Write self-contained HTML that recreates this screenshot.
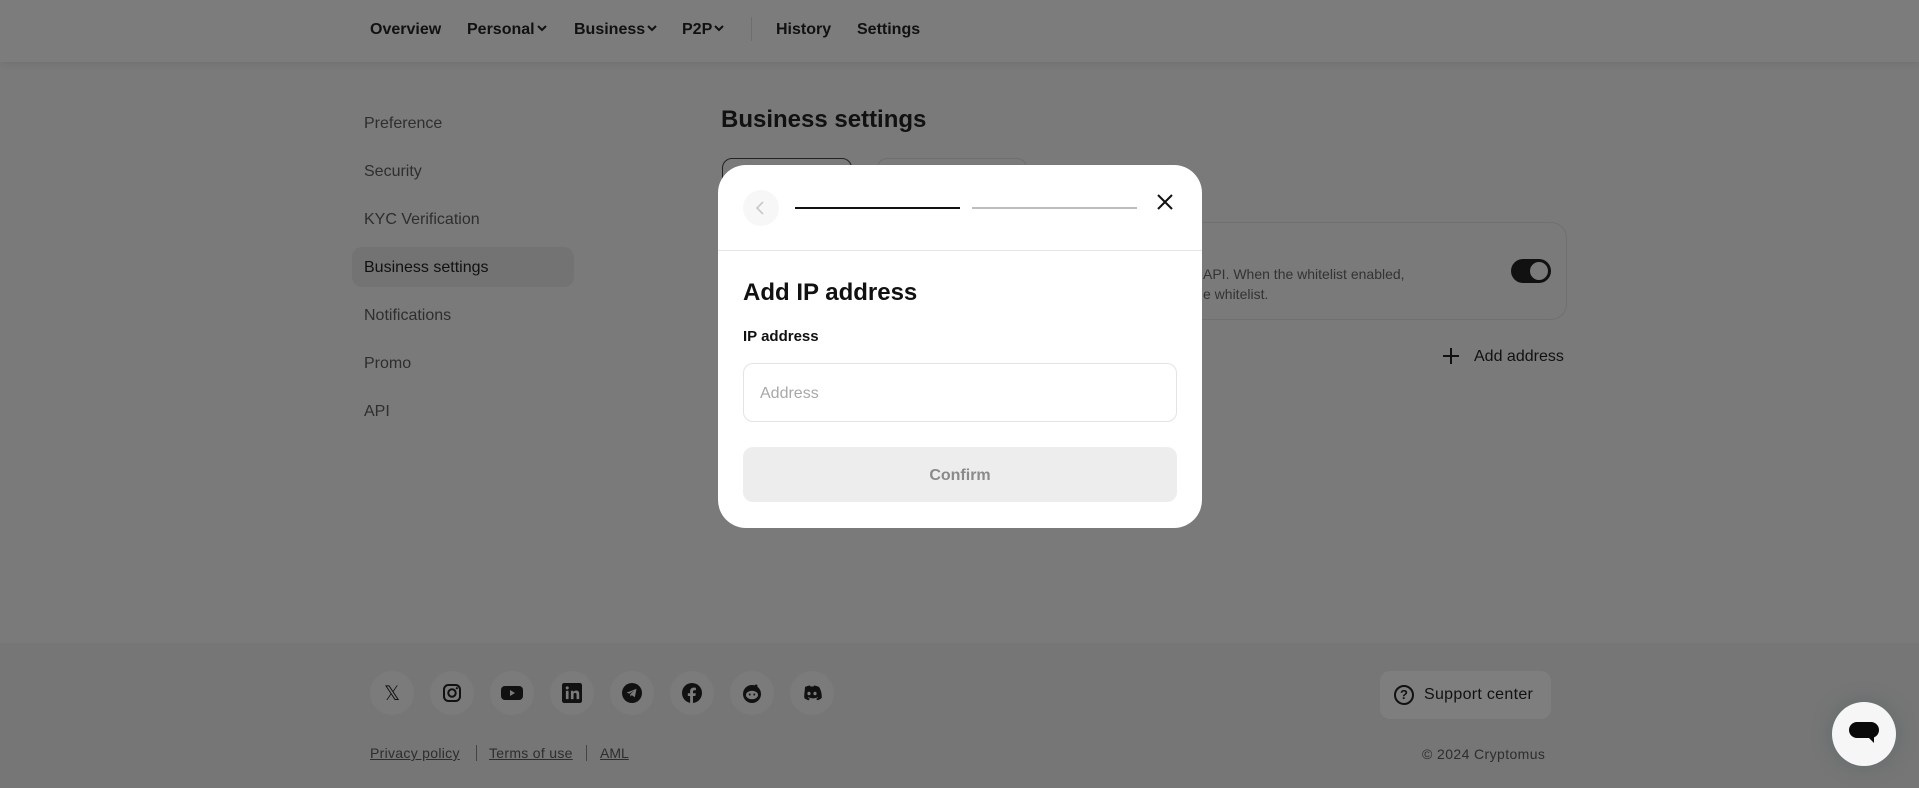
<!DOCTYPE html>
<html><head><meta charset="utf-8"><style>
*{margin:0;padding:0;box-sizing:border-box}
body{width:1919px;height:788px;overflow:hidden;background:#7a7a7a;font-family:"Liberation Sans",sans-serif;position:relative;color:#111}
.a{position:absolute;white-space:nowrap}
.hdr{position:absolute;left:0;top:0;width:1919px;height:62px;background:#7c7c7c;box-shadow:0 2px 8px rgba(0,0,0,.08)}
.nav{font-size:16px;font-weight:bold;color:#111;top:21px}
.nav svg{margin-left:2px;vertical-align:2px}
.side{font-size:16px;color:#2e2e2e;left:364px}
.ftr{position:absolute;left:0;top:643px;width:1919px;height:145px;background:#767676}
.ic{position:absolute;width:44px;height:44px;border-radius:50%;background:#7b7b7b;top:671px;display:flex;align-items:center;justify-content:center}
.lk{font-size:14px;color:#2d2d2d;text-decoration:underline;top:745px}
</style></head><body>
<div class="hdr"></div>
<div class="a nav" style="left:370px">Overview</div>
<div class="a nav" style="left:467px">Personal<svg width="10" height="7" viewBox="0 0 10 7"><path d="M1 1l4 4 4-4" fill="none" stroke="#111" stroke-width="2"/></svg></div>
<div class="a nav" style="left:574px">Business<svg width="10" height="7" viewBox="0 0 10 7"><path d="M1 1l4 4 4-4" fill="none" stroke="#111" stroke-width="2"/></svg></div>
<div class="a nav" style="left:682px">P2P<svg width="10" height="7" viewBox="0 0 10 7"><path d="M1 1l4 4 4-4" fill="none" stroke="#111" stroke-width="2"/></svg></div>
<div class="a" style="left:751px;top:17px;width:1px;height:24px;background:#6e6e6e"></div>
<div class="a nav" style="left:776px">History</div>
<div class="a nav" style="left:857px">Settings</div>

<div class="a" style="left:352px;top:247px;width:222px;height:40px;border-radius:10px;background:#737373"></div>
<div class="a side" style="top:115px">Preference</div>
<div class="a side" style="top:163px">Security</div>
<div class="a side" style="top:211px">KYC Verification</div>
<div class="a side" style="top:259px;color:#111">Business settings</div>
<div class="a side" style="top:307px">Notifications</div>
<div class="a side" style="top:355px">Promo</div>
<div class="a side" style="top:403px">API</div>

<div class="a" style="left:721px;top:106px;font-size:24px;font-weight:bold;color:#111">Business settings</div>
<div class="a" style="left:722px;top:158px;width:130px;height:40px;border:1.5px solid #222;border-radius:10px"></div>
<div class="a" style="left:877px;top:158px;width:150px;height:40px;border:1px solid #6f6f6f;border-radius:10px"></div>
<div class="a" style="left:1100px;top:222px;width:467px;height:98px;border:1px solid #707070;border-radius:16px"></div>
<div class="a" style="left:1203px;top:264px;font-size:14px;color:#333;line-height:20px">API. When the whitelist enabled,<br>e whitelist.</div>
<div class="a" style="left:1511px;top:259px;width:40px;height:24px;border-radius:12px;background:#111"></div>
<div class="a" style="left:1529px;top:261px;width:20px;height:20px;border-radius:50%;background:#7a7a7a;border:1.5px solid #111"></div>
<svg class="a" style="left:1443px;top:348px" width="16" height="16" viewBox="0 0 16 16"><path d="M8 0v16M0 8h16" stroke="#111" stroke-width="2"/></svg>
<div class="a" style="left:1474px;top:348px;font-size:16px;color:#111">Add address</div>

<div class="ftr"></div>
<div class="ic" style="left:370px;font-size:20px">𝕏</div>
<div class="ic" style="left:430px"><svg width="20" height="20" viewBox="0 0 20 20"><rect x="2" y="2" width="16" height="16" rx="4.5" fill="none" stroke="#111" stroke-width="2"/><circle cx="10" cy="10" r="3.7" fill="none" stroke="#111" stroke-width="2"/><circle cx="14.8" cy="5.2" r="1.1" fill="#111"/></svg></div>
<div class="ic" style="left:490px"><svg width="22" height="16" viewBox="0 0 22 16"><rect x="0" y="1" width="22" height="14" rx="4" fill="#111"/><path d="M9 5v6l5-3z" fill="#7b7b7b"/></svg></div>
<div class="ic" style="left:550px"><svg width="20" height="20" viewBox="0 0 18 18"><rect width="18" height="18" rx="2" fill="#111"/><rect x="3.5" y="7" width="2.4" height="7.5" fill="#7b7b7b"/><circle cx="4.7" cy="4.4" r="1.4" fill="#7b7b7b"/><path d="M8 7h2.3v1.2c.5-.9 1.5-1.4 2.6-1.4 2 0 2.6 1.3 2.6 3.3v4.4h-2.4v-4c0-1-.3-1.6-1.2-1.6-1 0-1.5.7-1.5 1.7v3.9H8z" fill="#7b7b7b"/></svg></div>
<div class="ic" style="left:610px"><svg width="20" height="20" viewBox="0 0 20 20"><circle cx="10" cy="10" r="10" fill="#111"/><path d="M4.5 9.8l10-4-1.7 8.5-3-2.2-1.5 1.5v-2.5l4-3.6-5 3.1z" fill="#7b7b7b"/></svg></div>
<div class="ic" style="left:670px"><svg width="20" height="20" viewBox="0 0 20 20"><circle cx="10" cy="10" r="10" fill="#111"/><path d="M11 20v-7h2.4l.4-2.8H11V8.6c0-.8.3-1.4 1.4-1.4h1.5V4.7c-.3 0-1.2-.1-2.2-.1-2.1 0-3.6 1.3-3.6 3.7v1.9H5.8V13h2.3v7z" fill="#7b7b7b"/></svg></div>
<div class="ic" style="left:730px"><svg width="20" height="20" viewBox="0 0 20 20"><circle cx="10" cy="11" r="9" fill="#111"/><ellipse cx="10" cy="12" rx="6" ry="4.3" fill="#7b7b7b"/><circle cx="7.7" cy="11.5" r="1" fill="#111"/><circle cx="12.3" cy="11.5" r="1" fill="#111"/><circle cx="14" cy="3" r="1.5" fill="#111"/></svg></div>
<div class="ic" style="left:790px"><svg width="22" height="16" viewBox="0 0 22 16"><path d="M4 2c2-1 4-1.5 5-1.5l.5 1h3l.5-1c1 0 3 .5 5 1.5 2 3 3 7 2.7 11-1.5 1.2-3 2-4.5 2.3l-1-1.6 2-1-.5-.4c-3 1.4-6.4 1.4-9.4 0l-.5.4 2 1-1 1.6C6.3 15 4.8 14.2 3.3 13 3 9 4 5 4 2z" fill="#111"/><ellipse cx="8" cy="8.5" rx="1.6" ry="1.8" fill="#7b7b7b"/><ellipse cx="14" cy="8.5" rx="1.6" ry="1.8" fill="#7b7b7b"/></svg></div>
<div class="a lk" style="left:370px;letter-spacing:.3px">Privacy policy</div>
<div class="a" style="left:476px;top:745px;width:1px;height:16px;background:#444"></div>
<div class="a lk" style="left:489px;letter-spacing:.3px">Terms of use</div>
<div class="a" style="left:586px;top:745px;width:1px;height:16px;background:#444"></div>
<div class="a lk" style="left:600px">AML</div>
<div class="a" style="left:1380px;top:671px;width:171px;height:48px;border-radius:10px;background:#7e7e7e"></div>
<div class="a" style="left:1394px;top:685px;width:20px;height:20px;border:2px solid #111;border-radius:50%;font-size:13px;font-weight:bold;text-align:center;line-height:16px">?</div>
<div class="a" style="left:1424px;top:686px;font-size:16px;color:#111;letter-spacing:.3px">Support center</div>
<div class="a" style="left:1422px;top:746px;font-size:14px;color:#2d2d2d;letter-spacing:.4px">© 2024 Cryptomus</div>
<div class="a" style="left:1832px;top:702px;width:64px;height:64px;border-radius:50%;background:#f6f6f6;box-shadow:0 0 20px rgba(60,90,90,.35)"></div>
<div class="a" style="left:1849px;top:722px;width:30px;height:16px;border-radius:8px;background:#0a0a0a"></div>
<div class="a" style="left:1868px;top:737px;width:0;height:0;border-left:6px solid transparent;border-top:6px solid #0a0a0a"></div>

<div class="a" style="left:718px;top:165px;width:484px;height:363px;background:#fff;border-radius:28px;overflow:hidden">
  <div class="a" style="left:25px;top:25px;width:36px;height:36px;border-radius:50%;background:#f7f7f7"></div>
  <svg class="a" style="left:36px;top:35px" width="14" height="16" viewBox="0 0 14 16"><path d="M9 2L3 8l6 6" fill="none" stroke="#c8c8c8" stroke-width="1.6"/></svg>
  <div class="a" style="left:77px;top:42px;width:165px;height:2px;background:#111"></div>
  <div class="a" style="left:254px;top:42px;width:165px;height:2px;background:#bdbdbd"></div>
  <svg class="a" style="left:438px;top:28px" width="18" height="18" viewBox="0 0 18 18"><path d="M2 2l14 14M16 2L2 16" stroke="#111" stroke-width="2"/></svg>
  <div class="a" style="left:0;top:85px;width:484px;height:1px;background:#e5e5e5"></div>
  <div class="a" style="left:25px;top:114px;font-size:24px;font-weight:bold;color:#111">Add IP address</div>
  <div class="a" style="left:25px;top:163px;font-size:15px;font-weight:bold;color:#111">IP address</div>
  <div class="a" style="left:25px;top:198px;width:434px;height:59px;border:1px solid #e3e3e3;border-radius:10px"></div>
  <div class="a" style="left:42px;top:220px;font-size:16px;color:#a8a8a8">Address</div>
  <div class="a" style="left:25px;top:282px;width:434px;height:55px;border-radius:10px;background:#ededed;text-align:center;line-height:57px;font-size:16px;font-weight:bold;color:#8a8a8a">Confirm</div>
</div>
</body></html>
